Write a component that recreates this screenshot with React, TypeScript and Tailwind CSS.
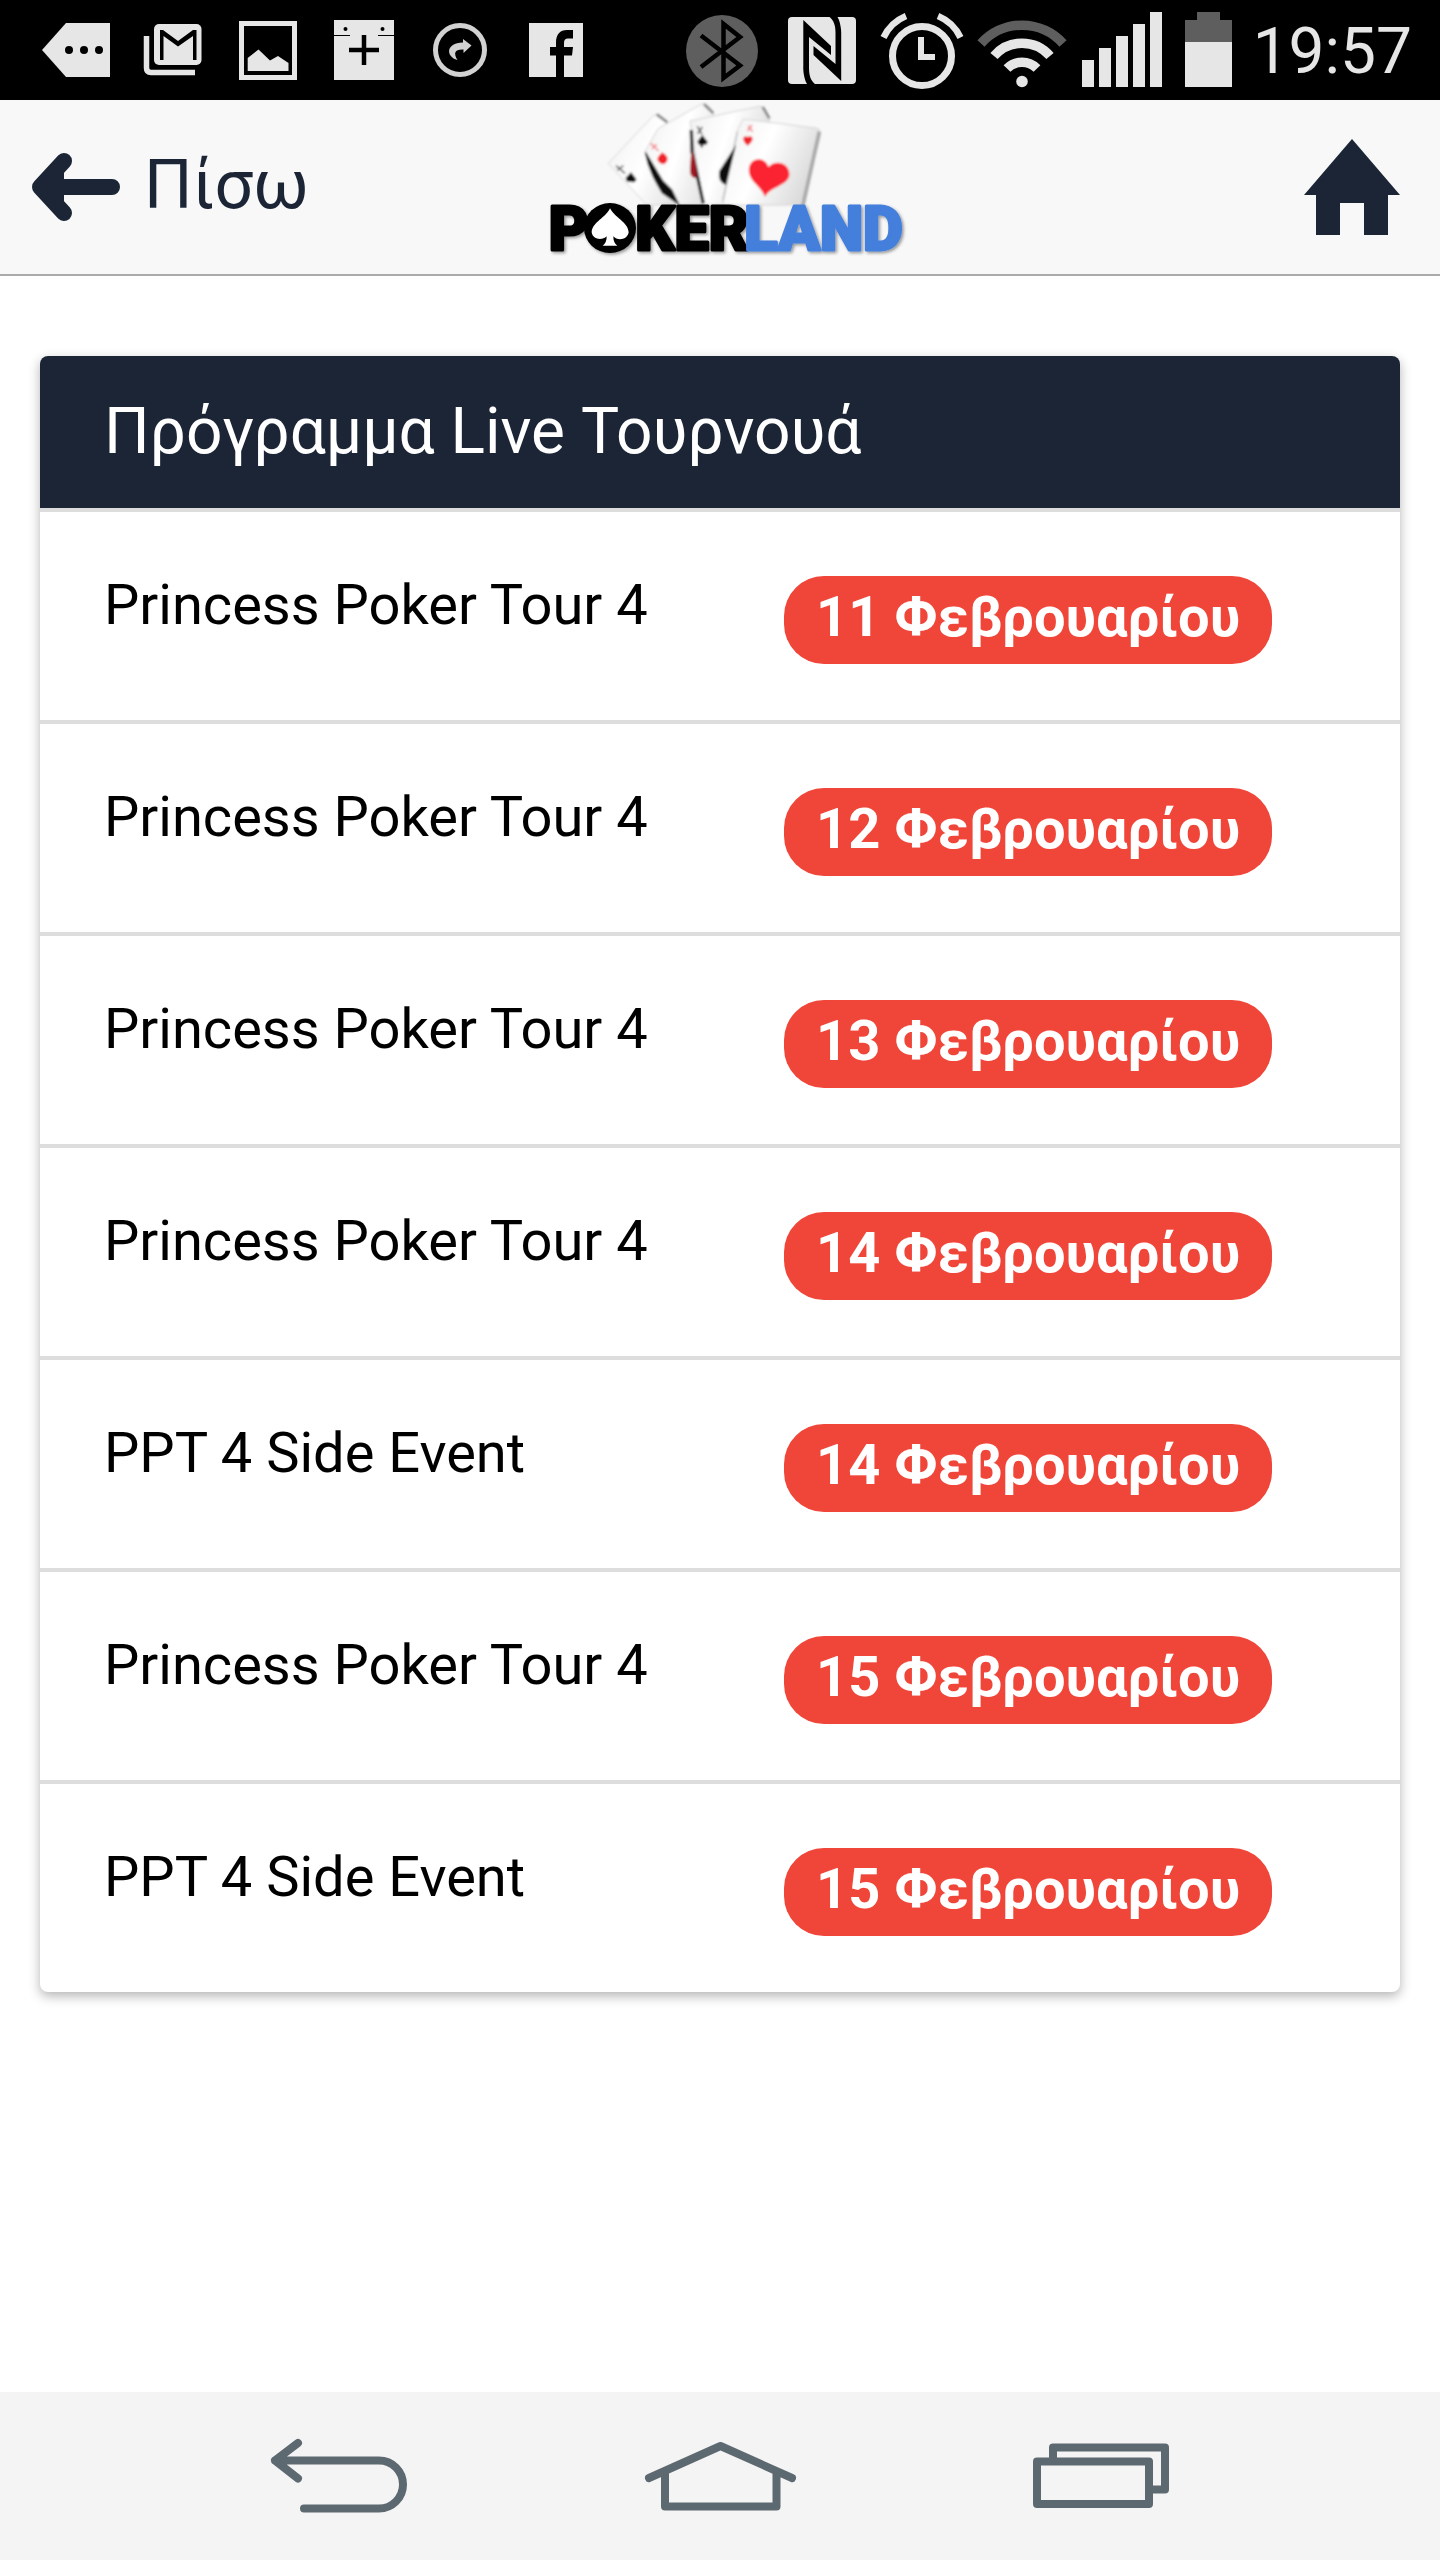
import type { ReactNode } from "react";

const LIGHT = "#e6e6e6";
const DIM = "#5e5e5e";

const events = [
  { name: "Princess Poker Tour 4", date: "11 Φεβρουαρίου" },
  { name: "Princess Poker Tour 4", date: "12 Φεβρουαρίου" },
  { name: "Princess Poker Tour 4", date: "13 Φεβρουαρίου" },
  { name: "Princess Poker Tour 4", date: "14 Φεβρουαρίου" },
  { name: "PPT 4 Side Event", date: "14 Φεβρουαρίου" },
  { name: "Princess Poker Tour 4", date: "15 Φεβρουαρίου" },
  { name: "PPT 4 Side Event", date: "15 Φεβρουαρίου" },
];

function StatusIcon({ x, w, children }: { x: number; w: number; children: ReactNode }) {
  return (
    <svg width={w} height={100} viewBox={`${x} 0 ${w} 100`} className="shrink-0" aria-hidden="true">
      {children}
    </svg>
  );
}

function StatusBar() {
  return (
    <div className="flex h-[100px] items-center justify-between bg-black px-7">
      <div className="flex">
        <StatusIcon x={28} w={96}>
          <path d="M42 50 66 23H110V77H66Z" fill={LIGHT} />
          <circle cx="69" cy="50" r="4" />
          <circle cx="84" cy="50" r="4" />
          <circle cx="99" cy="50" r="4" />
        </StatusIcon>
        <StatusIcon x={124} w={96}>
          <rect x="154" y="24" width="47.500" height="41" rx="5" fill={LIGHT} />
          <path d="M160 60V30H163L178 41 193 30H196.500V60H193V36L178 46.500 163.500 36V60Z" />
          <path d="M146.500 36V68Q146.500 72.500 151 72.500H195" fill="none" stroke={LIGHT} strokeWidth="5.500" />
        </StatusIcon>
        <StatusIcon x={220} w={96}>
          <rect x="241.500" y="23.500" width="53" height="54" fill="none" stroke={LIGHT} strokeWidth="5" />
          <path d="M247.700 58 258.500 49.500 270 60.500 278 56 288.500 63V71H247.700Z" fill={LIGHT} />
        </StatusIcon>
        <StatusIcon x={316} w={96}>
          <rect x="334" y="20" width="60" height="60" fill={LIGHT} />
          <path d="M349 50H379M364 35V65" stroke="#000" strokeWidth="4.500" />
          <path d="M334 35.500H350M378 35.500H394" stroke="#000" strokeWidth="1" />
          <circle cx="345.500" cy="29" r="2" />
          <circle cx="382.500" cy="29" r="2" />
        </StatusIcon>
        <StatusIcon x={412} w={96}>
          <circle cx="460" cy="50" r="24.500" fill="none" stroke="#d2d2d2" strokeWidth="5" />
          <path d="M463 39 471.500 45.500 463.500 53V49.500C455 49 453 53 457.500 60 446 57 445 43 463 42.500Z" fill="#d2d2d2" />
        </StatusIcon>
        <StatusIcon x={508} w={96}>
          <rect x="529" y="23" width="54" height="54" fill={LIGHT} />
          <path d="M556 77V55.500H550V47H556V43C556 34 560 30 567 30H573V38.500H568C565 38.500 564 40 564 43V47H573L572 55.500H564V77Z" />
        </StatusIcon>
      </div>
      <div className="flex items-center">
        <StatusIcon x={672} w={96}>
          <circle cx="722" cy="51" r="36" fill={DIM} />
          <path d="M701 35.500 740 65.500 723.500 78V24L740 37 701 67" fill="none" stroke="#000" strokeWidth="4.500" />
        </StatusIcon>
        <StatusIcon x={768} w={100}>
          <rect x="788" y="17" width="68" height="67" rx="4" fill={LIGHT} />
          <path d="M803.300 20 831 46V55L809 37V68C809 76 811 81 815 84H807C804 79 803 70 803.300 66Z" />
          <path d="M841.200 81 813.500 55V46L835.500 64V33C835.500 25 833.500 20 829.500 17H837.500C840.500 22 841.500 31 841.200 35Z" />
        </StatusIcon>
        <StatusIcon x={868} w={104}>
          <g fill="none" stroke={LIGHT}>
            <circle cx="922" cy="56" r="29.500" strokeWidth="7" />
            <path d="M883.500 37.500A43 43 0 0 1 906 16M938 16A43 43 0 0 1 960.500 37.500" strokeWidth="6.500" />
            <path d="M921 37V57H935" strokeWidth="6" />
          </g>
        </StatusIcon>
        <StatusIcon x={972} w={102}>
          <g fill="none" strokeWidth="9.500">
            <path d="M981 43.500A55 55 0 0 1 1063 43.500" stroke={DIM} />
            <path d="M994 56A37 37 0 0 1 1050 56" stroke={LIGHT} />
            <path d="M1007 68.500A21 21 0 0 1 1037 68.500" stroke={LIGHT} />
          </g>
          <circle cx="1022" cy="81.500" r="5.800" fill={LIGHT} />
        </StatusIcon>
        <StatusIcon x={1074} w={98}>
          <path d="M1082 60h12v27h-12zM1099 48h12v39h-12zM1116 36h12v51h-12zM1133 24h12v63h-12zM1150 12h12v75h-12z" fill={LIGHT} />
        </StatusIcon>
        <StatusIcon x={1172} w={81}>
          <path d="M1185 42V20H1197V12H1220V20H1232V42Z" fill={DIM} />
          <rect x="1185" y="42" width="47" height="45" fill={LIGHT} />
        </StatusIcon>
        <time className="pt-1 text-[64px] leading-[72px] text-[#e6e6e6]">19:57</time>
      </div>
    </div>
  );
}

function Logo() {
  return (
    <svg width="390" height="174" viewBox="-15 15 1170 522" role="img" aria-label="Pokerland">
      <defs>
        <linearGradient id="card" x1="0" y1="0" x2="1" y2="0.4">
          <stop offset="0" stopColor="#f0f0f0" />
          <stop offset="0.5" stopColor="#ffffff" />
          <stop offset="1" stopColor="#dcdcdc" />
        </linearGradient>
        <filter id="soft" x="-10%" y="-10%" width="120%" height="120%">
          <feGaussianBlur stdDeviation="3" />
        </filter>
        <filter id="cast" x="-10%" y="-10%" width="125%" height="130%">
          <feDropShadow dx="5" dy="5" stdDeviation="5" floodColor="#000" floodOpacity="0.4" />
        </filter>
      </defs>
      <g filter="url(#soft)">
        <g fill="url(#card)" stroke="#d4d4d4" strokeWidth="3">
          <path d="M235 205 370 62Q385 52 410 80L540 330H350Z" />
          <path d="M345 170 385 100 515 27Q535 20 550 58L600 330H440Z" />
          <path d="M480 78 690 34Q705 30 718 72L700 330H520Z" />
          <path d="M640 72 862 100Q874 105 870 125L815 330H578L625 100Z" />
        </g>
        <path d="M380 58 412 82M522 28 550 55M698 36 718 70" stroke="#8a8a8a" strokeWidth="8" fill="none" />
        <path d="M868 110 818 335" stroke="#a9a9a9" strokeWidth="11" />
        <path d="M622 110 578 318" stroke="#bdbdbd" strokeWidth="4" />
        <path d="M346 172C356 225 378 262 397 293L445 326 425 285 398 258Z" fill="#111" stroke="#111" strokeWidth="4" />
        <path d="M484 105 486 170 520 325" stroke="#222" strokeWidth="10" fill="none" />
        <path d="M484 165Q502 195 500 250 480 250 480 225Z" fill="#a01520" />
        <path d="M618 150 568 228Q562 262 588 270Z" fill="#111" />
        <path d="M303 232 319 252Q316 266 303 260 288 264 287 248ZM517 120 533 140Q530 152 519 149V157H512V149Q502 150 503 138Z" fill="#111" />
        <path d="M258 212 285 235M262 226 280 212M502 94 516 118M503 116 517 96" stroke="#666" strokeWidth="5" />
        <path d="M397 172Q412 182 413 192 410 206 399 208 384 204 382 192 385 182 397 172ZM653 152Q638 140 640 128 645 120 653 126 664 120 668 130 668 142 653 152Z" fill="#f0222c" />
        <path d="M362 145 386 168M366 162 380 148M652 108 666 90M654 92 668 110" stroke="#f58a90" strokeWidth="5" />
        <path d="M705 305C692 270 652 258 657 218 664 186 704 184 716 216 738 190 782 206 778 242 772 272 722 274 705 305Z" fill="#fb2430" />
      </g>
      <g filter="url(#cast)">
        <g fontFamily="Roboto" fontWeight="900" fontSize="184" strokeWidth="9" strokeLinejoin="round">
          <text x="56" y="466" fill="#000" stroke="#000">P</text>
          <text x="316" y="466" fill="#000" stroke="#000">KER</text>
          <text x="643" y="466" fill="#447fdc" stroke="#447fdc">LAND</text>
        </g>
        <ellipse cx="240" cy="399" rx="78" ry="75" fill="#000" />
      </g>
      <path d="M240 340C252 366 295 382 296 412 292 436 262 438 250 424 250 438 254 446 262 452H218C226 446 230 438 230 424 216 438 188 434 185 412 186 382 230 366 240 340Z" fill="#fff" />
    </svg>
  );
}

function Header() {
  return (
    <header className="grid h-[176px] grid-cols-[1fr_auto_1fr] items-center border-b-2 border-[#aaaaaa] bg-[#f8f8f8] px-8 text-[#1b2536]">
      <button type="button" className="flex items-center gap-6 justify-self-start">
        <svg width="88" height="70" viewBox="32 153 88 70" fill="none" stroke="currentColor" strokeWidth="16" strokeLinecap="round" strokeLinejoin="round" aria-hidden="true">
          <path d="M64 162 40 188 64 214M40 188H112" />
          <path d="M40 188 64 164V212Z" fill="currentColor" stroke="none" />
        </svg>
        <span className="pb-1 text-[68px] leading-[80px]">Πίσω</span>
      </button>
      <Logo />
      <a href="#home" aria-label="Home" className="mr-2 justify-self-end">
        <svg width="96" height="96" viewBox="1304 140 96 96" fill="currentColor" aria-hidden="true">
          <path d="M1352 140 1400 196H1388V236H1364V204H1340V236H1316V196H1304Z" />
        </svg>
      </a>
    </header>
  );
}

function Schedule() {
  return (
    <section className="overflow-hidden rounded-lg shadow-[0_4px_12px_rgba(0,0,0,0.3)]">
      <table className="w-full table-fixed border-separate border-spacing-0">
        <thead>
          <tr>
            <th colSpan={2} scope="colgroup" className="bg-[#1b2536] px-16 py-9 text-left text-[64px] leading-[80px] font-normal text-white">
              Πρόγραμμα Live Τουρνουά
            </th>
          </tr>
        </thead>
        <tbody>
          {events.map((event, i) => (
            <tr key={i} className="align-top">
              <td className="border-t-4 border-[#dddddd] pt-[61px] pl-16 text-[56px] leading-[64px] whitespace-nowrap text-black">
                {event.name}
              </td>
              <td className="border-t-4 border-[#dddddd] px-16 pt-16 pb-14">
                <div className="w-fit rounded-[40px] bg-[#f04639] px-8 pt-[9px] pb-[15px] text-[56px] leading-[64px] font-bold whitespace-nowrap text-white">
                  {event.date}
                </div>
              </td>
            </tr>
          ))}
        </tbody>
      </table>
    </section>
  );
}

function NavButton({ label, x, children }: { label: string; x: number; children: ReactNode }) {
  return (
    <button type="button" aria-label={label} className="flex flex-1 justify-center">
      <svg width="160" height="168" viewBox={`${x} 0 160 168`} fill="none" stroke="#5d6970" strokeWidth="8" strokeLinecap="round" strokeLinejoin="round" aria-hidden="true">
        {children}
      </svg>
    </button>
  );
}

export default function App() {
  return (
    <div className="flex min-h-screen flex-col bg-white font-[Roboto,sans-serif]">
      <StatusBar />
      <Header />
      <main className="flex-1 px-10 py-20">
        <Schedule />
      </main>
      <nav className="flex bg-[#f4f4f4] px-37">
        <NavButton label="Back" x={259}>
          <path d="M298 51 275 68.500 298 86.500M275 68.500H379A24 24 0 0 1 379 116.500H304" />
        </NavButton>
        <NavButton label="Home" x={640}>
          <path d="M649 86 720.500 54 792 86M665 81V114.500H776.500V81" />
        </NavButton>
        <NavButton label="Recent apps" x={1021}>
          <path d="M1037 69.500H1149V112H1037ZM1053 69V55.500H1165V97.500H1151" />
        </NavButton>
      </nav>
    </div>
  );
}
